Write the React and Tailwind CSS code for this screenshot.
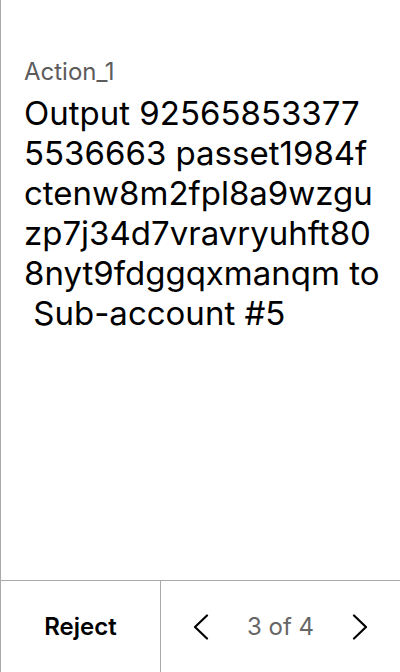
const lines = [
  'Output 92565853377',
  '5536663 passet1984f',
  'ctenw8m2fpl8a9wzgu',
  'zp7j34d7vravryuhft80',
  '8nyt9fdggqxmanqm to',
  ' Sub-account #5',
];

export default function App() {
  return (
    <div className="flex h-[672px] w-[400px] flex-col border-l border-[#aaaaaa] bg-white font-['Inter',sans-serif] text-black">
      <div className="flex-1 pl-[23px] pr-6 pt-[56px]">
        <p className="text-[24px] leading-[32px] text-[#5c5c5c]">Action_1</p>
        <p className="mt-[5px] text-[33px] leading-[40px]">
          {lines.map((line) => (
            <span key={line} className="block whitespace-pre">
              {line}
            </span>
          ))}
        </p>
      </div>
      <div className="flex h-[92px] border-t border-[#aaaaaa]">
        <button className="flex w-[160px] items-center justify-center border-r border-[#aaaaaa] text-[24px] font-semibold">
          Reject
        </button>
        <div className="flex flex-1 items-center justify-between px-8">
          <svg width="16" height="26" viewBox="0 0 16 26" fill="none" stroke="black" strokeWidth="2.2" strokeLinecap="round" strokeLinejoin="round">
            <polyline points="14,1.5 2,13 14,24.5" />
          </svg>
          <span className="text-[24px] text-[#666666]">3 of 4</span>
          <svg width="16" height="26" viewBox="0 0 16 26" fill="none" stroke="black" strokeWidth="2.2" strokeLinecap="round" strokeLinejoin="round">
            <polyline points="2,1.5 14,13 2,24.5" />
          </svg>
        </div>
      </div>
    </div>
  );
}
